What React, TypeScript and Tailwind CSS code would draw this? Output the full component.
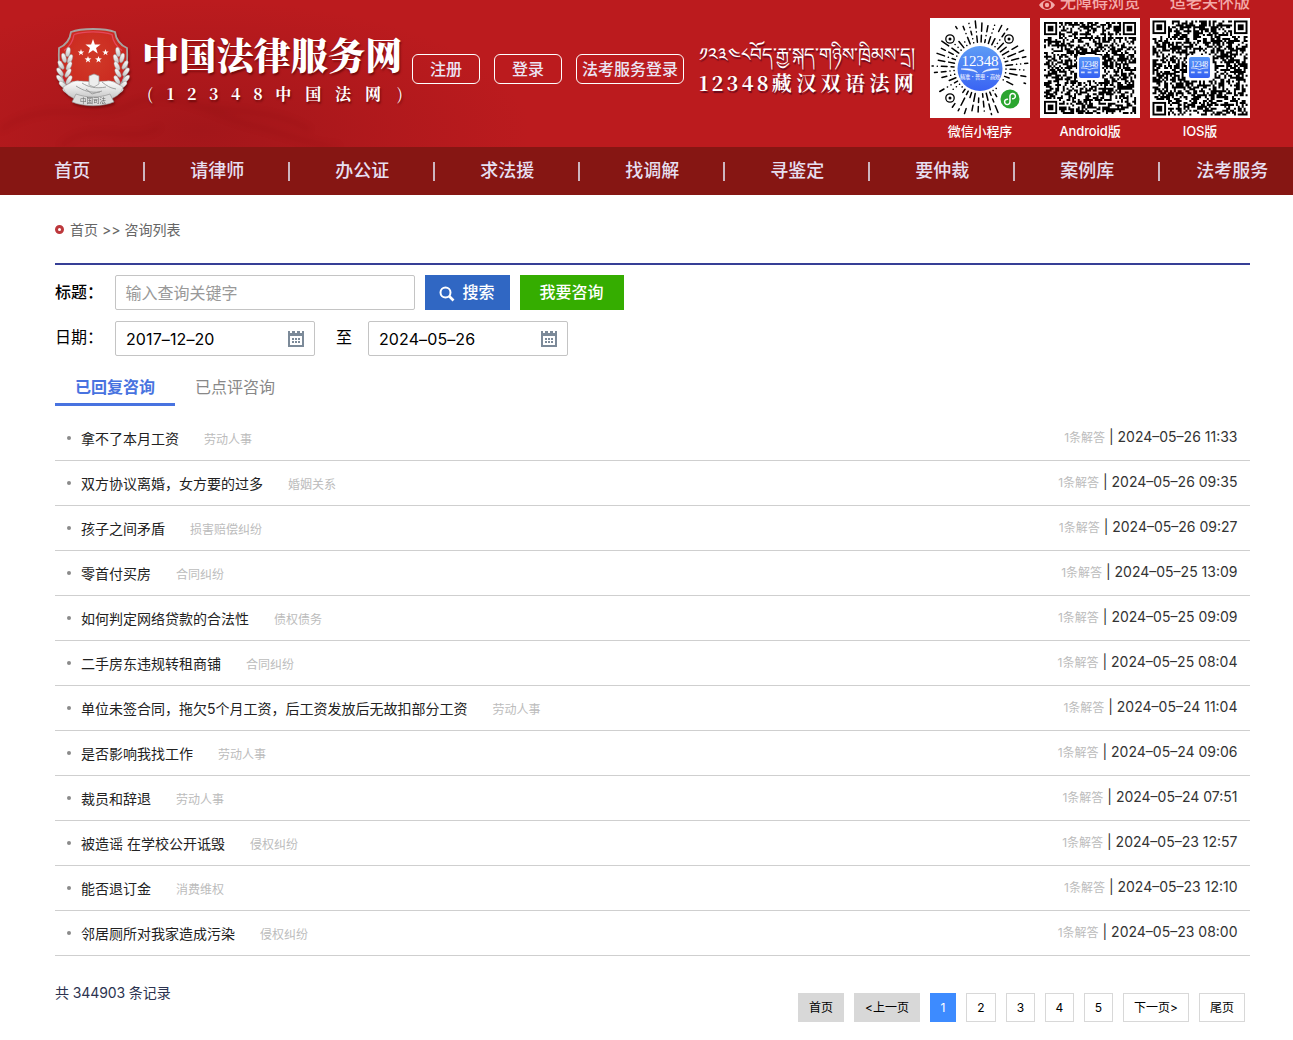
import React from 'react';

const NAV = ['首页', '请律师', '办公证', '求法援', '找调解', '寻鉴定', '要仲裁', '案例库', '法考服务'];

const ROWS = [
  ['拿不了本月工资', '劳动人事', '2024–05–26 11:33'],
  ['双方协议离婚，女方要的过多', '婚姻关系', '2024–05–26 09:35'],
  ['孩子之间矛盾', '损害赔偿纠纷', '2024–05–26 09:27'],
  ['零首付买房', '合同纠纷', '2024–05–25 13:09'],
  ['如何判定网络贷款的合法性', '债权债务', '2024–05–25 09:09'],
  ['二手房东违规转租商铺', '合同纠纷', '2024–05–25 08:04'],
  ['单位未签合同，拖欠5个月工资，后工资发放后无故扣部分工资', '劳动人事', '2024–05–24 11:04'],
  ['是否影响我找工作', '劳动人事', '2024–05–24 09:06'],
  ['裁员和辞退', '劳动人事', '2024–05–24 07:51'],
  ['被造谣 在学校公开诋毁', '侵权纠纷', '2024–05–23 12:57'],
  ['能否退订金', '消费维权', '2024–05–23 12:10'],
  ['邻居厕所对我家造成污染', '侵权纠纷', '2024–05–23 08:00'],
];

const PAGES = [
  { label: '首页', box: 'w-[46px] bg-[#d8d8d8] border-[#d8d8d8]' },
  { label: '<上一页', box: 'w-[66px] bg-[#d8d8d8] border-[#d8d8d8]' },
  { label: '1', box: 'w-[26px] bg-[#3d8bff] border-[#3d8bff] text-white' },
  { label: '2', box: 'w-[30px] border-[#d8d8d8]' },
  { label: '3', box: 'w-[29px] border-[#d8d8d8]' },
  { label: '4', box: 'w-[29px] border-[#d8d8d8]' },
  { label: '5', box: 'w-[29px] border-[#d8d8d8]' },
  { label: '下一页>', box: 'w-[66px] border-[#d8d8d8]' },
  { label: '尾页', box: 'w-[46px] border-[#d8d8d8]' },
];

function random(seed: number) {
  let s = seed;
  return () => {
    s = (s * 1664525 + 1013904223) % 4294967296;
    return s / 4294967296;
  };
}

function starPoints(cx: number, cy: number, r: number) {
  return Array.from({ length: 10 }, (_, i) => {
    const a = (Math.PI / 5) * i - Math.PI / 2;
    const q = i % 2 ? r * 0.4 : r;
    return `${(cx + q * Math.cos(a)).toFixed(2)},${(cy + q * Math.sin(a)).toFixed(2)}`;
  }).join(' ');
}

function Emblem() {
  const leaves = [
    [12, 25, 10], [8, 31, -15], [14, 32, 20], [5, 38, -30], [13, 39, 25], [4, 45, -35], [12, 46, 30],
    [4, 52, -40], [13, 53, 30], [7, 58, -50], [15, 59, 30], [11, 64, -60],
  ];
  const branch = (
    <g fill="url(#silver)" stroke="#8e8e8e" strokeWidth=".4">
      {leaves.map(([x, y, r], i) => (
        <ellipse key={i} cx={x} cy={y} rx="2.2" ry="4.8" transform={`rotate(${r} ${x} ${y})`} />
      ))}
    </g>
  );
  return (
    <svg viewBox="0 0 74 82" className="h-[82px] w-[74px] drop-shadow-[1px_2px_1px_rgba(80,0,0,0.5)]">
      <defs>
        <linearGradient id="silver" x1="0" y1="0" x2="0" y2="1">
          <stop offset="0" stopColor="#fff" />
          <stop offset="1" stopColor="#c2c2c2" />
        </linearGradient>
        <radialGradient id="shield" cx=".5" cy=".4" r=".6">
          <stop offset="0" stopColor="#d03a28" />
          <stop offset=".75" stopColor="#cb2a20" />
          <stop offset="1" stopColor="#c40f2b" />
        </radialGradient>
      </defs>
      <path d="M37 2c9 0 17 1 22 3 1 7 5 13 12 16 1 18-1 32-9 40-7 6-16 9-25 13C28 70 19 67 12 61 4 53 2 39 3 21 10 18 14 12 15 5c5-2 13-3 22-3Z" fill="url(#shield)" stroke="#a9a19f" strokeWidth="1.8" />
      <path d="M18 7.500c10-3.500 28-3.500 38 0 1 7 4 12 10 16M18 7.500c-1 7-4 12-10 16" fill="none" stroke="#e4475c" strokeWidth="1.3" />
      {branch}
      <g transform="translate(74 0) scale(-1 1)">{branch}</g>
      <g fill="#fff">
        <polygon points={starPoints(37, 20, 8)} />
        <polygon points={starPoints(25, 25.5, 3.4)} />
        <polygon points={starPoints(49.5, 25.5, 3.4)} />
        <polygon points={starPoints(32, 32.5, 3.6)} />
        <polygon points={starPoints(42.5, 32.5, 3.6)} />
      </g>
      <path d="M7 60c6-3 11-7 16-6 5 0 9 1 14 0 5 1 9 0 14 0 5-1 10 3 16 6-2 7-8 11-15 13H22C15 71 9 67 7 60Z" fill="url(#silver)" stroke="#999" strokeWidth=".5" />
      <path d="M33 49l5-2 5 2v8l-5 3-5-2Z" fill="#ededed" stroke="#999" strokeWidth=".7" />
      <path d="M20 59c8 5 14 7 24 6M26 56c6 4 14 6 24 4M46 55c5 4 8 6 14 7M30 62l6 5 10-3" fill="none" stroke="#979797" strokeWidth=".9" />
      <path d="M20 67c11 4 23 4 34 0l4 8c-12 5-30 5-42 0Z" fill="#dcdcdc" stroke="#8d8d8d" strokeWidth=".6" />
      <text x="37" y="75.6" textAnchor="middle" fontSize="6.5" fill="#666" className="font-['Noto_Sans_CJK_SC',sans-serif]">中国司法</text>
    </svg>
  );
}

function AppMark({ x, y, size }: { x: number; y: number; size: number }) {
  return (
    <g transform={`translate(${x} ${y}) scale(${size / 22})`}>
      <rect x="-2" y="-2" width="26" height="26" rx="3" fill="#fff" />
      <rect width="22" height="22" rx="2" fill="url(#mark)" />
      <text x="11" y="10.5" textAnchor="middle" fontSize="8" textLength="18" fill="#fff" className="font-['Liberation_Serif',serif]">12348</text>
      <path d="M2 11.500c3 0 6 .3 9 1.600 3-1.300 6-1.600 9-1.600" fill="none" stroke="#fff" strokeWidth=".8" />
      <path d="M2 16h4M9 16h4M16 16h4" stroke="#fff" strokeWidth="1.800" opacity=".75" />
    </g>
  );
}

function QrCode({ seed, inset }: { seed: number; inset: number }) {
  const n = 49;
  const rnd = random(seed);
  let d = '';
  for (let y = 0; y < n; y++) {
    for (let x = 0; x < n; x++) {
      const on = rnd() < 0.53;
      const corner = (x < 8 && y < 8) || (x > n - 9 && y < 8) || (x < 8 && y > n - 9);
      const middle = Math.abs(x - 24) < 7 && Math.abs(y - 24) < 7;
      if (on && !corner && !middle) d += `M${x} ${y}h1.04v1.04h-1.04z`;
    }
  }
  const finders = [[0, 0], [n - 7, 0], [0, n - 7]];
  const size = 100 - inset * 2;
  return (
    <svg viewBox="0 0 100 100" className="size-[100px] bg-white">
      <defs>
        <linearGradient id="mark" x1="0" y1="0" x2="0" y2="1">
          <stop offset="0" stopColor="#5796f7" />
          <stop offset="1" stopColor="#3560f2" />
        </linearGradient>
      </defs>
      <g transform={`translate(${inset} ${inset}) scale(${size / n})`}>
        <path d={d} fill="#000" />
        {finders.map(([x, y]) => (
          <g key={`${x}-${y}`}>
            <rect x={x + 0.5} y={y + 0.5} width="6" height="6" fill="#fff" stroke="#000" />
            <rect x={x + 2} y={y + 2} width="3" height="3" />
          </g>
        ))}
      </g>
      <AppMark x={39} y={39} size={21} />
    </svg>
  );
}

function MiniProgramCode() {
  const rnd = random(77);
  const count = 44;
  const rays = Array.from({ length: count }, (_, i) => {
    const a = (Math.PI * 2 * (i + 0.3)) / count;
    const parts: string[] = [];
    let r = 26;
    while (r < 47) {
      const len = rnd() < 0.4 ? 0.1 : 2.5 + rnd() * 6;
      const end = Math.min(r + len, 48);
      const ex = 50 + end * Math.cos(a);
      const ey = 50 + end * Math.sin(a);
      const sx = 50 + r * Math.cos(a);
      const sy = 50 + r * Math.sin(a);
      const hit = [[20, 21], [79, 21], [20, 80]].some(
        ([cx, cy]) => Math.hypot(ex - cx, ey - cy) < 7 || Math.hypot(sx - cx, sy - cy) < 7,
      );
      const green = Math.hypot(ex - 80, ey - 81) < 13 || (ex > 78 && ey > 78);
      if (!hit && !green && rnd() > 0.1) parts.push(`M${sx} ${sy}L${ex} ${ey}`);
      r = end + 4;
    }
    return parts.join('');
  }).join('');
  return (
    <svg viewBox="0 0 100 100" className="size-[100px] bg-white">
      <defs>
        <linearGradient id="disc" x1="0" y1="0" x2="0" y2="1">
          <stop offset="0" stopColor="#5d9cf5" />
          <stop offset="1" stopColor="#3a63f3" />
        </linearGradient>
      </defs>
      <path d={rays} stroke="#000" strokeWidth="1.5" strokeLinecap="round" fill="none" />
      {[[20, 21], [79, 21], [20, 80]].map(([x, y]) => (
        <g key={`${x}-${y}`}>
          <circle cx={x} cy={y} r="4.2" fill="#fff" stroke="#000" strokeWidth="1.3" />
          <circle cx={x} cy={y} r="1.5" />
        </g>
      ))}
      <circle cx="50" cy="50.5" r="22.5" fill="url(#disc)" />
      <text x="50" y="48" textAnchor="middle" fontSize="15" textLength="37" fill="#fff" className="font-['Liberation_Serif',serif]">12348</text>
      <path d="M31 51c7-.8 13 0 16.500 3.500-5-2.300-11-2.500-16.500-3.500ZM69 51c-7-.8-13 0-16.500 3.500 5-2.300 11-2.500 16.500-3.500Z" fill="#fff" stroke="#fff" strokeWidth=".5" />
      <text x="50" y="61" textAnchor="middle" fontSize="5.2" textLength="40" fill="#e6ecff" className="font-['Noto_Sans_CJK_SC',sans-serif]">精准·普惠·高效</text>
      <circle cx="80" cy="81" r="9.500" fill="#2ba52f" />
      <path d="M77.500 81.200a2.700 2.700 0 1 0 2.500 2.600v-5.600a2.700 2.700 0 1 1 2.600 2.600" fill="none" stroke="#fff" strokeWidth="1.500" strokeLinecap="round" />
    </svg>
  );
}

function CalendarIcon() {
  return (
    <svg viewBox="0 0 16 17" className="h-[17px] w-4" fill="#7c8a99" shapeRendering="crispEdges">
      <path d="M0 4h16v13H0zM2 6v9h12V6z" fillRule="evenodd" />
      <path d="M0 1h2v2h2V1h3v2h2V1h3v2h2V1h2v4H0z" />
      <path d="M4 8h2v2H4zM7 8h2v2H7zM10 8h2v2h-2zM4 11h2v2H4zM7 11h2v2H7zM10 11h2v2h-2z" />
    </svg>
  );
}

function DateField({ value }: { value: string }) {
  return (
    <div className="flex h-[35px] w-[200px] items-center justify-between rounded-[2px] border border-[#c4c4c4] px-2.5 text-base text-black">
      <span className="tracking-[0.1px]">{value}</span>
      <CalendarIcon />
    </div>
  );
}

function Header() {
  return (
    <header className="relative flex h-[147px] overflow-hidden bg-[#bb1b1e] bg-[radial-gradient(ellipse_330px_130px_at_200px_130px,#a3161a,transparent)] text-white">
      <svg viewBox="0 0 420 147" className="absolute top-0 left-0 h-[147px] w-[420px] opacity-10 blur-[3px]" fill="none" stroke="#600" strokeWidth="5">
        <path d="M0 130c50-35 90-5 130-25s80 10 120 20 60 20 90 22M160 90c40 30 100 10 150 40M60 147c30-30 70 0 100-20" />
      </svg>
      <div className="relative mt-[27px] ml-14 shrink-0"><Emblem /></div>
      <div className="relative ml-[12px] w-[270px] shrink-0 pt-[28px] font-['Noto_Serif_CJK_SC',serif] font-bold whitespace-nowrap [text-shadow:1px_2px_2px_rgba(70,0,0,0.6)]">
        <h1 className="text-[37px] leading-[52px] font-black tracking-[0.2px]">中国法律服务网</h1>
        <p className="pt-px pl-[5px] text-base leading-[26px]">
          <span className="font-normal tracking-[14px]">(</span>
          <span className="tracking-[12.600px]">12348</span>
          <span className="tracking-[13.900px]">中国法网</span>
          <span className="pl-0.5 font-normal">)</span>
        </p>
      </div>
      <div className="relative mt-[54px] flex h-[30px] shrink-0 gap-3.5 text-base font-medium text-[#ece4f3]">
        <button className="w-[68px] rounded-md border border-white">注册</button>
        <button className="w-[68px] rounded-md border border-white">登录</button>
        <button className="w-[108px] rounded-md border border-white whitespace-nowrap">法考服务登录</button>
      </div>
      <div className="ml-[15px] w-[231px] shrink-0 pt-9 font-['Noto_Serif_CJK_SC',serif] whitespace-nowrap [text-shadow:1px_2px_1px_rgba(50,0,30,0.6)]">
        <p className="h-[34px] text-[18.500px] leading-[34px]">༡༢༣༤༨བོད་རྒྱ་སྐད་གཉིས་ཁྲིམས་དྲ།</p>
        <p className="text-xl leading-[26px] font-bold tracking-[4.400px]"><span className="tracking-[3.200px]">12348</span>藏汉双语法网</p>
      </div>
      <div className="w-80 shrink-0">
        <div className="flex h-[18px] justify-end gap-[30px] text-base leading-6 text-[#f3aaa9]">
          <span className="-mt-[10px] flex gap-1 font-medium">
            <svg viewBox="0 0 18 12" className="mt-[9px] h-3 w-[18px]">
              <path d="M1 6c4-6.500 12-6.500 16 0-4 6.500-12 6.500-16 0Z" fill="currentColor" />
              <circle cx="9" cy="6" r="4" fill="#bb1b1e" />
              <circle cx="9" cy="6" r="2.200" fill="currentColor" />
            </svg>
            无障碍浏览
          </span>
          <span className="-mt-[10px] font-medium">适老关怀版</span>
        </div>
        <div className="flex gap-2.5 text-center text-[13px] leading-[27px] font-medium tracking-[-0.1px]">
          <div className="w-[100px]"><MiniProgramCode />微信小程序</div>
          <div className="w-[100px]"><QrCode seed={11} inset={4} />Android版</div>
          <div className="w-[100px]"><QrCode seed={52} inset={2.5} />IOS版</div>
        </div>
      </div>
    </header>
  );
}

export default function App() {
  return (
    <div className="h-[1040px] w-[1293px] overflow-hidden bg-white font-['Inter','Noto_Sans_CJK_SC',sans-serif] text-[#333]">
      <Header />
      <nav className="flex h-12 bg-[#861613] text-lg font-medium text-[#e6dff0]">
        {NAV.map((item, i) => (
          <a key={item} className="flex h-full w-[145px] shrink-0 items-center">
            <span className="w-[142.5px] pl-0.5 text-center">{item}</span>
            {i < NAV.length - 1 && <i className="h-[19px] w-0.5 bg-[#cdb5bf]" />}
          </a>
        ))}
      </nav>

      <main className="ml-[55px] w-[1195px]">
        <div className="flex h-[70px] items-center gap-1.5 border-b-2 border-[#363f96] text-sm text-[#666]">
          <i className="size-[9px] rounded-full border-[3px] border-[#bd383c]" />
          <span className="pt-0.5">首页 &gt;&gt; 咨询列表</span>
        </div>

        <div className="mt-2.5 flex h-[35px] text-base">
          <label className="flex w-[60px] leading-[34px] font-medium text-black"><span>标题</span><span>：</span></label>
          <div className="h-[35px] w-[300px] rounded-[2px] border border-[#c4c4c4] pl-[9.5px] leading-[35px] text-[#999]">输入查询关键字</div>
          <button className="ml-2.5 flex w-[85px] items-center justify-center gap-[7px] bg-[#3067c3] pr-px pb-px font-medium text-white">
            <svg viewBox="0 0 16 16" className="mt-1 size-4" fill="none" stroke="currentColor" strokeWidth="2">
              <circle cx="6.500" cy="6.500" r="5" />
              <path d="m10 10 4.500 4.500" strokeWidth="2.600" />
            </svg>
            搜索
          </button>
          <button className="ml-2.5 w-[104px] bg-[#35ad00] pr-px pb-0.5 font-medium text-white">我要咨询</button>
        </div>
        <div className="mt-[11px] flex h-[35px] text-base">
          <label className="flex w-[60px] leading-[33px] text-black"><span>日期</span><span>：</span></label>
          <DateField value="2017–12–20" />
          <span className="w-[53px] pl-[21px] leading-[33px] text-black">至</span>
          <DateField value="2024–05–26" />
        </div>

        <div className="mt-[15px] flex h-[35px] text-base leading-8">
          <a className="w-[120px] border-b-[3px] border-[#4873e0] text-center font-bold text-[#4873e0]">已回复咨询</a>
          <a className="w-[120px] text-center text-[#888]">已点评咨询</a>
        </div>

        <ul className="mt-2.5">
          {ROWS.map(([title, tag, time]) => (
            <li key={title} className="flex h-[45px] items-center border-b border-[#cfcfcf] pr-[12.5px] pl-3">
              <i className="mr-2.5 size-1 rounded-full bg-[#8a8a8a]" />
              <span className="pt-0.5 text-sm text-[#222]">{title}</span>
              <span className="ml-[25px] pt-[3px] text-xs text-[#bcbcbc]">{tag}</span>
              <span className="ml-auto -mt-0.5 flex items-center text-sm whitespace-pre">
                <span className="pt-0.5 text-xs text-[#bcbcbc]">1条解答</span>
                <span> | {time}</span>
              </span>
            </li>
          ))}
        </ul>

        <div className="flex justify-between pt-[27px] pr-[5px]">
          <span className="text-sm tracking-[-0.1px] text-[#2c3350]">共 344903 条记录</span>
          <div className="mt-2.5 flex gap-2.5 text-xs text-black">
            {PAGES.map((p) => (
              <a key={p.label} className={`flex h-[29px] items-center justify-center border whitespace-nowrap ${p.box}`}>{p.label}</a>
            ))}
          </div>
        </div>
      </main>
    </div>
  );
}
